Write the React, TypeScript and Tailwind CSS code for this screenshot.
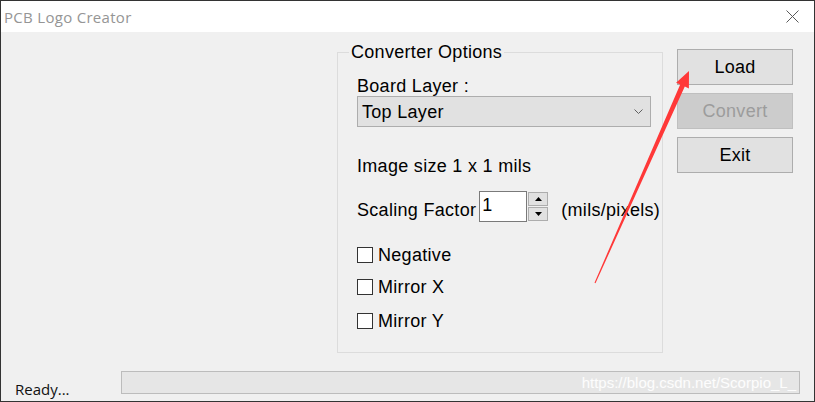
import React from "react";

const ui = { fontFamily: '"Liberation Sans", Arial, sans-serif' };
const sys = { fontFamily: '"Open Sans", "Noto Sans", sans-serif' };

function Check({ label, className }: { label: string; className?: string }) {
  return (
    <div className={`flex items-center h-[20px] ${className ?? ""}`}>
      <div className="w-[16px] h-[16px] border border-[#333333] bg-white" />
      <span className="ml-[5px] leading-[20px]">{label}</span>
    </div>
  );
}

function Button({ label, disabled }: { label: string; disabled?: boolean }) {
  return (
    <div
      className={`h-[36px] w-[116px] flex items-center justify-center border leading-[20px] ${
        disabled
          ? "bg-[#cccccc] border-[#bfbfbf] text-[#9c9c9c]"
          : "bg-[#e1e1e1] border-[#adadad] text-black"
      }`}
    >
      {label}
    </div>
  );
}

export default function App() {
  return (
    <div className="relative w-[815px] h-[402px] border border-[#333333] flex flex-col bg-[#f0f0f0] overflow-hidden">
      {/* title bar */}
      <div className="h-[31px] bg-white flex items-center justify-between pl-[3px] pr-[15px]">
        <span className="text-[15px] tracking-[0.3px] text-[#959595] leading-[20px]" style={sys}>
          PCB Logo Creator
        </span>
        <svg width="13" height="13" viewBox="0 0 13 13">
          <path d="M0.5 0.5 L12.5 12.5 M12.5 0.5 L0.5 12.5" stroke="#5a5a5a" strokeWidth="1" />
        </svg>
      </div>

      {/* body */}
      <div className="flex-1 flex flex-col text-[18px] tracking-[0.3px] text-black" style={ui}>
        <div className="flex pl-[336px]">
          <fieldset className="mt-[10px] w-[326px] h-[311px] border border-[#dcdcdc] p-0 m-0">
            <legend className="ml-[11px] px-[2px] leading-[20px]">Converter Options</legend>
            <div className="pl-[19px] pt-[14px] flex flex-col">
              <div className="leading-[20px]">Board Layer :</div>
              <div className="w-[294px] h-[31px] bg-[#e1e1e1] border border-[#adadad] flex items-center justify-between pl-[4px] pr-[7px]">
                <span className="leading-[20px]">Top Layer</span>
                <svg width="9" height="5" viewBox="0 0 9 5">
                  <path d="M0.5 0.5 L4.5 4.5 L8.5 0.5" stroke="#606060" fill="none" strokeWidth="1" />
                </svg>
              </div>
              <div className="mt-[29px] leading-[20px]">Image size 1 x 1 mils</div>
              <div className="mt-[15px] flex h-[31px]">
                <span className="mt-[9px] leading-[20px]">Scaling Factor</span>
                <div className="ml-[3px] w-[48px] h-[31px] bg-white border border-[#7a7a7a] pl-[2px] pt-[3px] leading-[20px]">
                  1
                </div>
                <div className="ml-[1px] mt-[1px] w-[20px] h-[29px] flex flex-col gap-[1px]">
                  <div className="flex-1 bg-[#e1e1e1] border border-[#adadad] flex items-center justify-center">
                    <svg width="7" height="4" viewBox="0 0 7 4">
                      <path d="M0 4 L3.5 0 L7 4 Z" fill="#000" />
                    </svg>
                  </div>
                  <div className="flex-1 bg-[#e1e1e1] border border-[#adadad] flex items-center justify-center">
                    <svg width="7" height="4" viewBox="0 0 7 4">
                      <path d="M0 0 L3.5 4 L7 0 Z" fill="#000" />
                    </svg>
                  </div>
                </div>
                <span className="ml-[13px] mt-[9px] leading-[20px]">(mils/pixels)</span>
              </div>
              <Check label="Negative" className="mt-[23px]" />
              <Check label="Mirror X" className="mt-[12px]" />
              <Check label="Mirror Y" className="mt-[14px]" />
            </div>
          </fieldset>
          <div className="ml-[14px] mt-[17px] flex flex-col gap-[8px]">
            <Button label="Load" />
            <Button label="Convert" disabled />
            <Button label="Exit" />
          </div>
        </div>

        {/* status bar */}
        <div className="mt-auto h-[31px] flex items-start tracking-normal">
          <span className="ml-[14px] mt-[9px] text-[15px] leading-[20px] text-[#111]" style={sys}>
            Ready...
          </span>
          <div className="ml-auto mr-[14px] mt-[1px] w-[679px] h-[23px] bg-[#e6e6e6] border border-[#bcbcbc] flex items-center justify-end pr-[3px]">
            <span className="text-[15px] leading-[20px] text-white/90">
              https://blog.csdn.net/Scorpio_L_
            </span>
          </div>
        </div>
      </div>

      {/* red annotation arrow */}
      <svg className="absolute left-0 top-0 pointer-events-none" width="815" height="402">
        <polygon
          points="593.5,281.8 679.2,83.6 675.1,81.8 688,70 687.9,87.4 683.8,85.6 594.5,282.2"
          fill="#ff3838"
        />
      </svg>
    </div>
  );
}
